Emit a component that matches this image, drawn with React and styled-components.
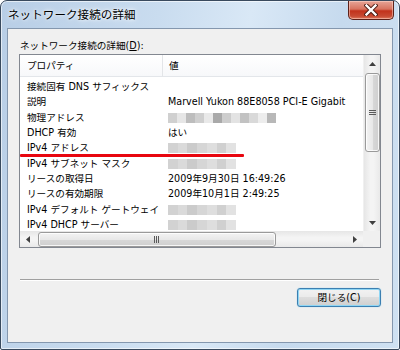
import React from "react";
import styled, { createGlobalStyle } from "styled-components";

const Global = createGlobalStyle`
  html, body { margin: 0; padding: 0; background: #fff; }
  body { font-family: "DejaVu Sans", "Noto Sans CJK JP", sans-serif; }
  * { box-sizing: border-box; }
`;

const Window = styled.div`
  width: 400px;
  height: 350px;
  border: 1px solid #394a5e;
  border-radius: 7px 7px 2px 2px;
  background: linear-gradient(100deg, #b8cee6 0%, #c9dcef 35%, #d9e8f6 55%, #c6daee 75%, #cfe1f2 100%);
  display: flex;
  flex-direction: column;
  box-shadow: inset 0 0 0 1px rgba(255,255,255,0.6);
`;

const TitleBar = styled.div`
  height: 27px;
  display: flex;
  align-items: flex-start;
  justify-content: space-between;
  padding-left: 7px;
  padding-right: 5px;
`;

const Title = styled.div`
  font-family: "Noto Sans CJK JP", sans-serif;
  font-size: 11.5px;
  line-height: 27px;
  color: #000;
  letter-spacing: 0.1px;
  text-shadow: 0 0 6px rgba(255,255,255,0.9), 0 0 3px rgba(255,255,255,0.9);
`;

const CloseBtn = styled.div`
  width: 46px;
  height: 19px;
  border: 1px solid #5c2119;
  border-top: none;
  border-radius: 0 0 5px 5px;
  background: linear-gradient(#e7a597 0%, #d8735f 45%, #c2321c 55%, #c84b33 85%, #e07a5f 100%);
  box-shadow: inset 0 0 0 1px rgba(255,220,210,0.5);
  display: flex;
  align-items: center;
  justify-content: center;
`;

const Client = styled.div`
  flex: 1;
  margin: 0 6px 6px 6px;
  border: 1px solid #8497ae;
  background: #f0f0f0;
  padding: 9px 11px 0 11px;
  display: flex;
  flex-direction: column;
`;

const GroupLabel = styled.div`
  font-size: 9.6px;
  line-height: 16px;
  height: 16px;
  color: #000;
  padding-left: 1px;
  u { text-decoration: underline; }
`;

const ListBox = styled.div`
  position: relative;
  height: 194px;
  border: 1px solid #828790;
  background: #fff;
  display: grid;
  grid-template-columns: 1fr 17px;
  grid-template-rows: 1fr 16px;
`;

const Content = styled.div`
  overflow: hidden;
  display: flex;
  flex-direction: column;
`;

const Header = styled.div`
  height: 22px;
  flex: none;
  display: grid;
  grid-template-columns: 143px 1fr;
  background: linear-gradient(#ffffff, #f7f8fa);
  border-bottom: 1px solid #e3e6ea;
`;

const HeaderCell = styled.div`
  font-size: 9.6px;
  line-height: 22px;
  padding-left: ${p => p.$pad}px;
  border-right: ${p => (p.$sep ? "1px solid #e3e5e8" : "none")};
  color: #000;
`;

const Rows = styled.div`
  padding-top: 2px;
`;

const Row = styled.div`
  height: 15.3px;
  display: grid;
  grid-template-columns: 143px 1fr;
  align-items: center;
  font-size: 9.6px;
  color: #000;
  white-space: nowrap;
`;

const Cell = styled.div`
  padding-left: ${p => p.$pad}px;
  line-height: 15px;
  overflow: visible;
`;

const Mosaic = styled.div`
  display: flex;
  height: 10px;
  width: ${p => p.$w}px;
  margin-top: 1px;
`;

const Tile = styled.div`
  flex: 1;
  background: ${p => p.$c};
`;

const VScroll = styled.div`
  background: linear-gradient(90deg, #e6e6e6, #f4f4f4 40%, #f4f4f4 60%, #e9e9e9);
  display: flex;
  flex-direction: column;
  align-items: center;
  border-left: 1px solid #f0f0f0;
`;

const HScroll = styled.div`
  background: linear-gradient(#e6e6e6, #f4f4f4 40%, #f4f4f4 60%, #e9e9e9);
  display: flex;
  align-items: center;
`;

const Corner = styled.div`
  background: #f0f0f0;
`;

const Arrow = styled.div`
  width: ${p => (p.$h ? "16px" : "17px")};
  height: ${p => (p.$h ? "16px" : "17px")};
  flex: none;
  display: flex;
  align-items: center;
  justify-content: center;
`;

const VThumb = styled.div`
  width: 15px;
  height: 79px;
  margin-top: 1px;
  border: 1px solid #9a9a9a;
  border-radius: 3px;
  background: linear-gradient(90deg, #f3f3f3, #e8e8e8 50%, #d8d8d8 51%, #cfcfcf);
  box-shadow: inset 0 0 0 1px rgba(255,255,255,0.8);
  display: flex;
  align-items: center;
  justify-content: center;
`;

const HThumb = styled.div`
  height: 15px;
  width: 238px;
  margin-left: 2px;
  border: 1px solid #9a9a9a;
  border-radius: 3px;
  background: linear-gradient(#f3f3f3, #e8e8e8 50%, #d8d8d8 51%, #cfcfcf);
  box-shadow: inset 0 0 0 1px rgba(255,255,255,0.8);
  display: flex;
  align-items: center;
  justify-content: center;
`;

const Spacer = styled.div`
  flex: 1;
`;

const RedMark = styled.div`
  position: absolute;
  left: 0px;
  top: 99px;
  width: 224px;
  height: 3px;
  background: #e8060f;
  border-radius: 1px;
`;

const Separator = styled.div`
  margin: 31px 2px 0 1px;
  border-top: 1px solid #a0a0a0;
  border-bottom: 1px solid #ffffff;
`;

const ButtonRow = styled.div`
  display: flex;
  justify-content: flex-end;
  margin-top: 7px;
  margin-bottom: 35px;
`;

const Button = styled.div`
  width: 84px;
  height: 19px;
  border: 1px solid #3c7fb1;
  border-radius: 3px;
  background: linear-gradient(#f2f2f2 0%, #ebebeb 45%, #dddddd 50%, #cfcfcf 100%);
  box-shadow: inset 0 0 0 1px #8fd6f4, 0 0 1px #6cc4ec;
  font-size: 9.6px;
  line-height: 17px;
  text-align: center;
  color: #000;
`;

const Up = () => (
  <svg width="7" height="4" viewBox="0 0 7 4"><path d="M0 4 L3.5 0 L7 4 Z" fill="#404040" /></svg>
);
const Down = () => (
  <svg width="7" height="4" viewBox="0 0 7 4"><path d="M0 0 L3.5 4 L7 0 Z" fill="#404040" /></svg>
);
const Left = () => (
  <svg width="4" height="7" viewBox="0 0 4 7"><path d="M4 0 L0 3.5 L4 7 Z" fill="#404040" /></svg>
);
const Right = () => (
  <svg width="4" height="7" viewBox="0 0 4 7"><path d="M0 0 L4 3.5 L0 7 Z" fill="#404040" /></svg>
);

const mosaicA = ["#d0d0d0", "#e6e6e6", "#bdbdbd", "#cfcfcf", "#e9e9e9", "#a9a9a9", "#cdcdcd", "#e3e3e3", "#c2c2c2", "#d9d9d9", "#ededed", "#b8b8b8"];
const mosaicB = ["#d2d2d2", "#dadada", "#cbcbcb", "#d6d6d6", "#dedede", "#d0d0d0", "#e2e2e2"];

const Blur = ({ w, tiles }) => (
  <Mosaic $w={w}>
    {tiles.map((c, i) => <Tile key={i} $c={c} />)}
  </Mosaic>
);

const rows = [
  ["接続固有 DNS サフィックス", ""],
  ["説明", "Marvell Yukon 88E8058 PCI-E Gigabit"],
  ["物理アドレス", "A"],
  ["DHCP 有効", "はい"],
  ["IPv4 アドレス", "B"],
  ["IPv4 サブネット マスク", "B"],
  ["リースの取得日", "2009年9月30日 16:49:26"],
  ["リースの有効期限", "2009年10月1日 2:49:25"],
  ["IPv4 デフォルト ゲートウェイ", "B"],
  ["IPv4 DHCP サーバー", "B"],
];

export default function App() {
  return (
    <>
      <Global />
      <Window>
        <TitleBar>
          <Title>ネットワーク接続の詳細</Title>
          <CloseBtn>
            <svg width="14" height="12" viewBox="0 0 14 12">
              <path d="M2.5 1.5 L11.5 10.5 M11.5 1.5 L2.5 10.5" stroke="#4a1a12" strokeWidth="4.2" strokeLinecap="square" />
              <path d="M2.5 1.5 L11.5 10.5 M11.5 1.5 L2.5 10.5" stroke="#ffffff" strokeWidth="2.4" strokeLinecap="square" />
            </svg>
          </CloseBtn>
        </TitleBar>
        <Client>
          <GroupLabel>ネットワーク接続の詳細(<u>D</u>):</GroupLabel>
          <ListBox>
            <Content>
              <Header>
                <HeaderCell $pad={7} $sep>プロパティ</HeaderCell>
                <HeaderCell $pad={6}>値</HeaderCell>
              </Header>
              <Rows>
                {rows.map(([k, v], i) => (
                  <Row key={i}>
                    <Cell $pad={7}>{k}</Cell>
                    <Cell $pad={5}>
                      {v === "A" ? (
                        <Blur w={108} tiles={mosaicA} />
                      ) : v === "B" ? (
                        <Blur w={68} tiles={mosaicB} />
                      ) : (
                        v
                      )}
                    </Cell>
                  </Row>
                ))}
              </Rows>
            </Content>
            <VScroll>
              <Arrow><Up /></Arrow>
              <VThumb>
                <svg width="7" height="6" viewBox="0 0 7 6">
                  <path d="M0 0.5 H7 M0 2.5 H7 M0 4.5 H7" stroke="#5a5a5a" strokeWidth="1" />
                </svg>
              </VThumb>
              <Spacer />
              <Arrow><Down /></Arrow>
            </VScroll>
            <HScroll>
              <Arrow $h><Left /></Arrow>
              <HThumb>
                <svg width="6" height="7" viewBox="0 0 6 7">
                  <path d="M0.5 0 V7 M2.5 0 V7 M4.5 0 V7" stroke="#5a5a5a" strokeWidth="1" />
                </svg>
              </HThumb>
              <Spacer />
              <Arrow $h><Right /></Arrow>
            </HScroll>
            <Corner />
            <RedMark />
          </ListBox>
          <Separator />
          <ButtonRow>
            <Button>閉じる(C)</Button>
          </ButtonRow>
        </Client>
      </Window>
    </>
  );
}
